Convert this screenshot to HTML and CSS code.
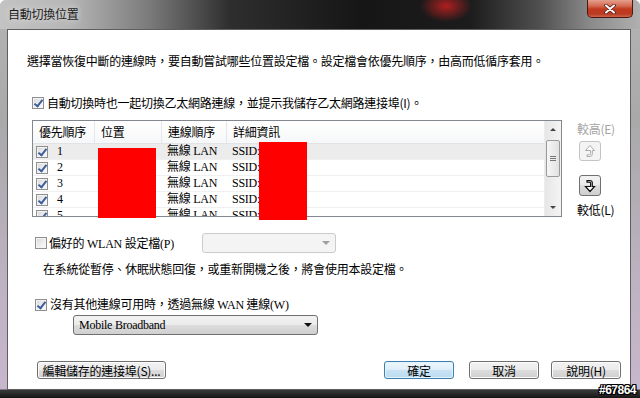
FILE: index.html
```html
<!DOCTYPE html>
<html lang="zh-Hant">

<head>
    <meta charset="UTF-8" />
    <meta name="viewport" content="width=device-width, initial-scale=1.0" />
    <title>自動切換位置</title>
    <link rel="stylesheet" href="styles.css">
</head>

<body>
    <div class="window">
        <header class="titlebar">
            <span class="title">自動切換位置</span>
            <div class="close-btn">
                <svg width="14" height="10" viewBox="0 0 14 10">
                    <path d="M3 1.5 L11 8.5 M11 1.5 L3 8.5" stroke="#5a1c12" stroke-width="3.6" stroke-linecap="round" />
                    <path d="M3 1.5 L11 8.5 M11 1.5 L3 8.5" stroke="#fff" stroke-width="2" stroke-linecap="round" />
                </svg>
            </div>
        </header>

        <div class="frame">
            <main class="client">
                <p class="intro">選擇當恢復中斷的連線時，要自動嘗試哪些位置設定檔。設定檔會依優先順序，由高而低循序套用。</p>

                <div class="check-line first">
                    <span class="cb on"></span>
                    <span>自動切換時也一起切換乙太網路連線，並提示我儲存乙太網路連接埠(I)。</span>
                </div>

                <section class="list-area">
                    <div class="listbox">
                        <div class="list-table">
                            <div class="list-head">
                                <span>優先順序</span>
                                <span>位置</span>
                                <span>連線順序</span>
                                <span>詳細資訊</span>
                            </div>
                            <div class="list-row hot">
                                <span class="num-cell"><span class="cb on"></span>1</span>
                                <span></span>
                                <span>無線 LAN</span>
                                <span>SSID:</span>
                            </div>
                            <div class="list-row">
                                <span class="num-cell"><span class="cb on"></span>2</span>
                                <span></span>
                                <span>無線 LAN</span>
                                <span>SSID:</span>
                            </div>
                            <div class="list-row">
                                <span class="num-cell"><span class="cb on"></span>3</span>
                                <span></span>
                                <span>無線 LAN</span>
                                <span>SSID:</span>
                            </div>
                            <div class="list-row">
                                <span class="num-cell"><span class="cb on"></span>4</span>
                                <span></span>
                                <span>無線 LAN</span>
                                <span>SSID:</span>
                            </div>
                            <div class="list-row">
                                <span class="num-cell"><span class="cb on"></span>5</span>
                                <span></span>
                                <span>無線 LAN</span>
                                <span>SSID:</span>
                            </div>
                        </div>
                        <div class="scrollbar">
                            <div class="sb-arrow"><span class="tri-up"></span></div>
                            <div class="sb-thumb"><span class="grip"></span></div>
                            <div class="sb-arrow bottom"><span class="tri-down"></span></div>
                        </div>
                        <!-- redacted areas -->
                        <div class="redact redact-place"></div>
                        <div class="redact redact-ssid"></div>
                    </div>

                    <div class="mover">
                        <span class="mover-label disabled">較高(E)</span>
                        <div class="mover-btn disabled">
                            <svg width="12" height="14" viewBox="0 0 12 14">
                                <path d="M6 1.5 L10.5 6.5 H8.3 V10 Q8.3 12.5 5.8 12.5 H3 V10.8 H5.6 Q6.6 10.8 6.6 9.6 V6.5 H1.5 Z" fill="#fff" stroke="#a9a9a9" stroke-width="1" />
                            </svg>
                        </div>
                        <div class="mover-btn down">
                            <svg width="12" height="14" viewBox="0 0 12 14">
                                <path d="M6 12.5 L10.5 7.5 H8.3 V4 Q8.3 1.5 5.8 1.5 H3 V3.2 H5.6 Q6.6 3.2 6.6 4.4 V7.5 H1.5 Z" fill="#fff" stroke="#111" stroke-width="1.2" />
                            </svg>
                        </div>
                        <span class="mover-label">較低(L)</span>
                    </div>
                </section>

                <div class="pref-row">
                    <span class="cb"></span>
                    <span class="pref-label serif">偏好的 WLAN 設定檔(P)</span>
                    <div class="combo disabled"><span class="combo-arrow"></span></div>
                </div>

                <p class="note">在系統從暫停、休眠狀態回復，或重新開機之後，將會使用本設定檔。</p>

                <div class="check-line wan">
                    <span class="cb on"></span>
                    <span class="serif">沒有其他連線可用時，透過無線 WAN 連線(W)</span>
                </div>

                <div class="combo mobile serif">
                    <span>Mobile Broadband</span>
                    <span class="combo-arrow"></span>
                </div>

                <footer class="button-row">
                    <button class="btn btn-edit">編輯儲存的連接埠(S)...</button>
                    <button class="btn btn-default">確定</button>
                    <button class="btn btn-cancel">取消</button>
                    <button class="btn btn-help">說明(H)</button>
                </footer>
            </main>
        </div>

        <span class="watermark">#67864</span>
    </div>
</body>

</html>
```

FILE: styles.css
```css
* {
    margin: 0px;
    padding: 0px;
    box-sizing: border-box;
}

body {
    width: 640px;
    height: 398px;
    overflow: hidden;
    font-family: "Noto Sans CJK TC", "Liberation Sans", sans-serif;
    font-size: 12px;
    letter-spacing: -0.25px;
    color: #000;
    background: #fff;
}

.serif {
    font-family: "Liberation Serif", "Noto Sans CJK TC", serif;
}

.window {
    position: relative;
    width: 640px;
    height: 398px;
    display: flex;
    flex-direction: column;
    border-radius: 6px 6px 0 0;
    overflow: hidden;
    background: linear-gradient(to bottom, #b4b4b4 0px, #a9a9aa 120px, #bfb3c4 300px, #c8b6cc 389px, #3a3a3a 390px, #151515 398px);
}

/* ---------- title bar ---------- */
.titlebar {
    height: 29px;
    display: flex;
    align-items: flex-start;
    background:
        radial-gradient(ellipse 26px 16px at 446px 6px, rgba(200, 32, 32, 0.85), rgba(200, 32, 32, 0) 100%),
        linear-gradient(to right, #c3c3c3 0px, #b6b6b6 70px, #7a7a7a 150px, #2e2e2e 230px, #161616 360px, #1c1c1c 470px, #505050 540px, #8a8a8a 590px, #b0b0b0 640px);
}

.title {
    margin: 5px 0 0 8px;
    line-height: 18px;
    color: #1c1c1c;
    text-shadow: 0 0 6px #e8e8e8;
}

.close-btn {
    margin-left: auto;
    margin-right: 7px;
    width: 46px;
    height: 18px;
    display: flex;
    align-items: center;
    justify-content: center;
    border: 1px solid #4a1810;
    border-top: none;
    border-radius: 0 0 5px 5px;
    background: linear-gradient(to bottom, #e4a08e 0px, #d46a52 6px, #c13a1e 9px, #b93a22 14px, #d6745a 18px);
}

/* ---------- frame + client ---------- */
.frame {
    flex: 1;
    display: flex;
    padding: 0 9px 8px 7px;
}

.client {
    flex: 1;
    display: flex;
    flex-direction: column;
    align-items: flex-start;
    background: #fff;
    border: 1px solid #5e5e5e;
}

.intro {
    margin: 23px 0 0 19px;
    line-height: 16px;
    white-space: nowrap;
}

.check-line {
    display: flex;
    align-items: center;
    height: 16px;
    line-height: 16px;
    white-space: nowrap;
}

.check-line .cb {
    margin-right: 3px;
}

.check-line.first {
    margin: 26px 0 0 24px;
}

.check-line.wan {
    margin: 20px 0 0 27px;
}

.cb {
    position: relative;
    display: inline-block;
    flex: none;
    width: 12px;
    height: 12px;
    border: 1px solid #8e8f8f;
    background: linear-gradient(135deg, #d6d6d6 0%, #f0f0f0 60%, #fbfbfb 100%);
    box-shadow: inset 0 0 0 1px #f4f4f4;
}

.cb.on::after {
    content: "";
    position: absolute;
    left: 3px;
    top: 0px;
    width: 3px;
    height: 7px;
    border: solid #3f5d9c;
    border-width: 0 2px 2px 0;
    transform: rotate(38deg);
}

/* ---------- list ---------- */
.list-area {
    display: flex;
    margin-top: 9px;
}

.listbox {
    position: relative;
    display: flex;
    margin-left: 24px;
    width: 530px;
    height: 97px;
    border: 1px solid #828790;
    overflow: visible;
}

.list-table {
    flex: 1;
    overflow: hidden;
}

.list-head,
.list-row {
    display: grid;
    grid-template-columns: 62px 67px 65px 1fr;
}

.list-head {
    height: 23px;
    background: linear-gradient(to bottom, #ffffff, #f6f7f8);
    border-bottom: 1px solid #e2e3e5;
}

.list-head span {
    padding-left: 6px;
    line-height: 21px;
    border-right: 1px solid #e4e6e9;
}

.list-head span:last-child {
    border-right: none;
}

.list-row {
    height: 16px;
    line-height: 15px;
    border-bottom: 1px solid #f0f0f0;
    font-family: "Liberation Serif", "Noto Sans CJK TC", serif;
}

.list-row span {
    padding-left: 5px;
    white-space: nowrap;
}

.list-row.hot {
    background: #ececec;
}

.num-cell {
    display: flex;
    align-items: center;
    padding-left: 3px !important;
}

.num-cell .cb {
    margin-right: 9px;
}

.scrollbar {
    width: 17px;
    display: flex;
    flex-direction: column;
    background: linear-gradient(to right, #e6e6e6, #f4f4f4);
    border-left: 1px solid #ececec;
}

.sb-arrow {
    height: 17px;
    display: flex;
    align-items: center;
    justify-content: center;
}

.sb-arrow.bottom {
    margin-top: auto;
}

.tri-up {
    border-left: 3px solid transparent;
    border-right: 3px solid transparent;
    border-bottom: 3px solid #444;
}

.tri-down {
    border-left: 3px solid transparent;
    border-right: 3px solid transparent;
    border-top: 3px solid #444;
}

.sb-thumb {
    margin: 2px 1px 0 1px;
    height: 37px;
    border: 1px solid #9a9a9a;
    border-radius: 2px;
    background: linear-gradient(to right, #f6f6f6, #e2e2e2);
    display: flex;
    align-items: center;
    justify-content: center;
}

.grip {
    width: 6px;
    height: 5px;
    border-top: 1px solid #777;
    border-bottom: 1px solid #777;
    background: linear-gradient(to bottom, transparent 1px, #777 1px, #777 2px, transparent 2px);
}

.redact {
    position: absolute;
    background: #ff0000;
}

.redact-place {
    left: 65px;
    top: 27px;
    width: 58px;
    height: 70px;
}

.redact-ssid {
    left: 226px;
    top: 21px;
    width: 48px;
    height: 78px;
}

.mover {
    display: flex;
    flex-direction: column;
    align-items: flex-start;
    margin-left: 15px;
    width: 44px;
}

.mover-label {
    margin-top: 1px;
    line-height: 16px;
    white-space: nowrap;
}

.mover-label.disabled {
    color: #a3a3a3;
}

.mover-btn {
    margin: 4px 0 0 2px;
    width: 22px;
    height: 20px;
    display: flex;
    align-items: center;
    justify-content: center;
    border: 1px solid #707070;
    border-radius: 3px;
    background: linear-gradient(to bottom, #f2f2f2 0%, #ebebeb 50%, #dddddd 50%, #cfcfcf 100%);
}

.mover-btn.disabled {
    border-color: #c2c5c7;
    background: #f4f4f4;
}

.mover-btn.down {
    margin-top: 14px;
    height: 21px;
}

.mover-btn.down + .mover-label {
    margin-top: 6px;
}

/* ---------- wlan / wan ---------- */
.pref-row {
    display: flex;
    align-items: center;
    height: 20px;
    margin: 15px 0 0 27px;
}

.pref-label {
    margin-left: 2px;
    width: 153px;
    white-space: nowrap;
}

.combo {
    display: flex;
    align-items: center;
    height: 20px;
    border-radius: 3px;
}

.combo.disabled {
    width: 134px;
    border: 1px solid #cbcbcb;
    background: #f4f4f4;
    justify-content: flex-end;
    padding-right: 5px;
}

.combo.disabled .combo-arrow {
    border-top-color: #a0a0a0;
}

.combo-arrow {
    margin-left: auto;
    border-left: 4px solid transparent;
    border-right: 4px solid transparent;
    border-top: 4px solid #111;
}

.note {
    margin: 8px 0 0 35px;
    line-height: 16px;
    white-space: nowrap;
}

.combo.mobile {
    margin: 2px 0 0 65px;
    width: 245px;
    padding: 0 5px 0 5px;
    border: 1px solid #707070;
    background: linear-gradient(to bottom, #f2f2f2 0%, #ebebeb 50%, #dddddd 50%, #cfcfcf 100%);
}

/* ---------- buttons ---------- */
.button-row {
    display: flex;
    align-self: stretch;
    margin-top: 26px;
    padding: 0 9px 0 29px;
}

.btn {
    height: 18px;
    width: 70px;
    font-family: "Noto Sans CJK TC", "Liberation Sans", sans-serif;
    font-size: 12px;
    letter-spacing: -0.25px;
    line-height: 15px;
    color: #000;
    border: 1px solid #707070;
    border-radius: 3px;
    background: linear-gradient(to bottom, #f2f2f2 0%, #ebebeb 50%, #dddddd 50%, #cfcfcf 100%);
    box-shadow: inset 0 0 0 1px #fcfcfc;
    white-space: nowrap;
}

.btn-edit {
    width: 129px;
}

.btn-default {
    margin-left: auto;
    border-color: #3c7fb1;
    background: linear-gradient(to bottom, #eef7fd 0%, #ddeef9 50%, #c9e3f4 50%, #bcdcf1 100%);
    box-shadow: inset 0 0 0 1px #e6f3fb;
}

.btn-cancel {
    margin-left: 15px;
}

.btn-help {
    margin-left: 12px;
}

.watermark {
    position: absolute;
    right: 4px;
    bottom: 1px;
    font-family: "Liberation Sans", sans-serif;
    font-weight: bold;
    font-size: 12px;
    letter-spacing: -0.5px;
    line-height: 14px;
    color: #fff;
    text-shadow: -1px -1px 0 #000, 1px -1px 0 #000, -1px 1px 0 #000, 1px 1px 0 #000, 0 1px 0 #000, 0 -1px 0 #000, 1px 0 0 #000, -1px 0 0 #000;
}
```
